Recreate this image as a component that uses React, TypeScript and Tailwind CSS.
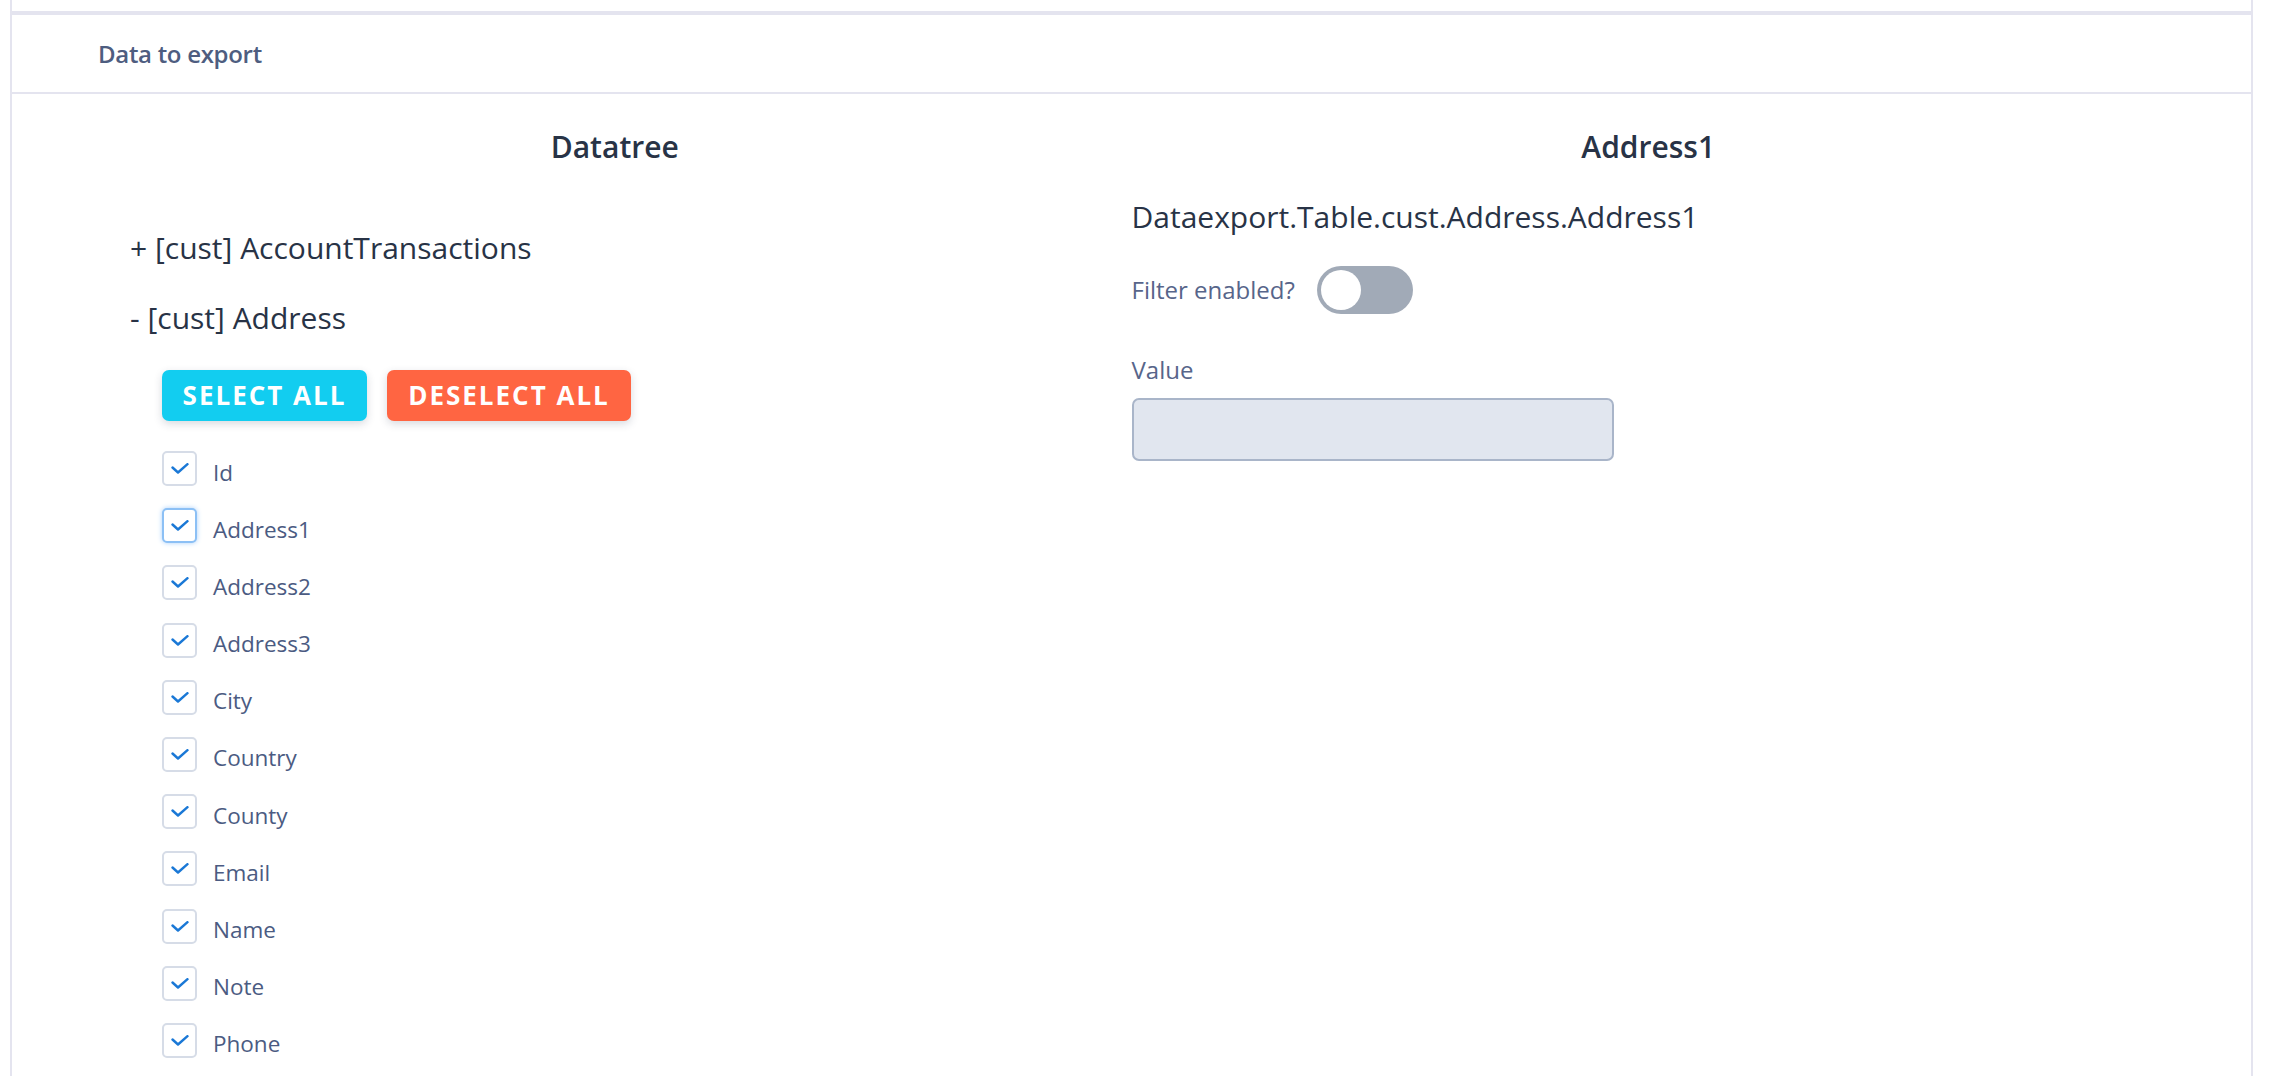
import React from "react";

const fields = [
  "Id",
  "Address1",
  "Address2",
  "Address3",
  "City",
  "Country",
  "County",
  "Email",
  "Name",
  "Note",
  "Phone",
];

const Check = () => (
  <svg width="18" height="11" viewBox="0 0 18 11" fill="none">
    <path
      d="M1.5 4.5 L7 9.5 L16.5 1.2"
      stroke="#1a78d6"
      strokeWidth="2.4"
      strokeLinecap="round"
      strokeLinejoin="round"
    />
  </svg>
);

const FieldRow = ({ label, focused }: { label: string; focused?: boolean }) => (
  <label className="flex items-center gap-4 h-[35px]">
    <span
      className={
        focused
          ? "flex items-center justify-center w-[35px] h-[35px] rounded-[5px] border-2 border-[#8cc0f5] shadow-[0_0_5px_#a9d0fa] bg-white"
          : "flex items-center justify-center w-[35px] h-[35px] rounded-[5px] border-2 border-[#d6dce7] bg-white"
      }
    >
      <Check />
    </span>
    <span className="mt-[7px] text-[22.5px] leading-[33px] text-[#4b5b82]">{label}</span>
  </label>
);

export default function App() {
  return (
    <div className="min-h-screen bg-white font-['Open_Sans',sans-serif]">
      <div className="ml-[10px] w-[2243px] border-x-2 border-[#e4e4ef] pt-[11px] min-h-[1076px]">
        <div className="border-t-4 border-[#e4e4ef]">
          <div className="h-[79px] flex items-center px-[86px] border-b-2 border-[#e4e4ef]">
            <h3 className="text-[24px] font-semibold tracking-[-0.3px] text-[#4e5d80]">
              Data to export
            </h3>
          </div>

          <div className="grid grid-cols-2 px-[86px] pt-[33px]">
            {/* left: tree */}
            <div className="flex flex-col">
              <h2 className="text-center text-[30px] leading-[40px] font-semibold text-[#283346]">
                Datatree
              </h2>
              <div className="pl-8 pt-[61px] flex flex-col gap-[30px] text-[30px] leading-[40px] text-[#283346]">
                <div>+ [cust] AccountTransactions</div>
                <div>- [cust] Address</div>
              </div>
              <div className="pl-16 pt-[32px] flex gap-5">
                <button className="w-[205px] h-[51px] rounded-[7px] bg-[#12cdf0] text-white text-[26px] font-bold tracking-[2px] shadow-[0_3px_8px_rgba(40,50,80,0.18)]">
                  SELECT ALL
                </button>
                <button className="w-[244px] h-[51px] rounded-[7px] bg-[#ff6542] text-white text-[26px] font-bold tracking-[2px] shadow-[0_3px_8px_rgba(40,50,80,0.18)]">
                  DESELECT ALL
                </button>
              </div>
              <div className="pl-16 pt-[30px] flex flex-col gap-[22.2px]">
                {fields.map((f) => (
                  <FieldRow key={f} label={f} focused={f === "Address1"} />
                ))}
              </div>
            </div>

            {/* right: details */}
            <div className="flex flex-col">
              <h2 className="text-center text-[30px] leading-[40px] font-semibold text-[#283346]">
                Address1
              </h2>
              <div className="pt-[30px] text-[30px] leading-[40px] text-[#283346]">
                Dataexport.Table.cust.Address.Address1
              </div>
              <div className="pt-[29px] flex items-center gap-[22px]">
                <span className="text-[24px] text-[#57658a]">Filter enabled?</span>
                <span className="flex items-center w-[96px] h-[48px] rounded-full bg-[#a1aab7] p-[4px]">
                  <span className="w-[40px] h-[40px] rounded-full bg-white" />
                </span>
              </div>
              <div className="pt-[40px] text-[24px] leading-[32px] text-[#57658a]">Value</div>
              <div className="pt-[12px]">
                <input className="w-[482px] h-[63px] rounded-[7px] border-2 border-[#a9b5c9] bg-[#e1e6ef] outline-none" />
              </div>
            </div>
          </div>
        </div>
      </div>
    </div>
  );
}
